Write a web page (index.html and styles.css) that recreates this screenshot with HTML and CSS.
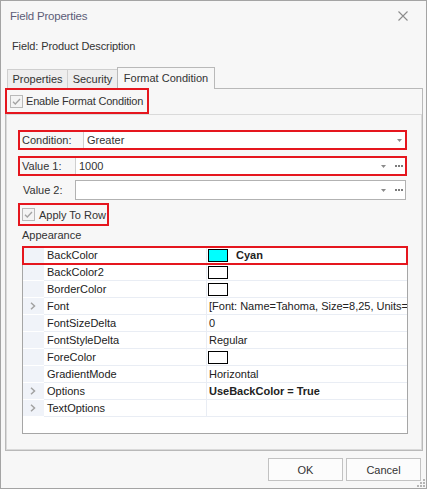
FILE: index.html
```html
<!DOCTYPE html>
<html>
<head>
<meta charset="utf-8">
<link rel="stylesheet" href="styles.css">
</head>
<body>
<div class="window">
  <div class="titlebar">
    <span class="title">Field Properties</span>
    <svg class="close" width="10" height="10" viewBox="0 0 10 10"><path d="M0.5 0.5 L9.5 9.5 M9.5 0.5 L0.5 9.5" stroke="#8c8c8c" stroke-width="1.1" fill="none"/></svg>
  </div>
  <div class="fieldname">Field: Product Description</div>
  <div class="tabs">
    <div class="tab tab-props">Properties</div>
    <div class="tab tab-sec">Security</div>
    <div class="tab tab-fmt active">Format Condition</div>
  </div>
  <div class="panel">
    <div class="enable">
      <svg class="check" width="13" height="13" viewBox="0 0 13 13"><rect x="0.5" y="0.5" width="12" height="12" fill="#f4f4f4" stroke="#b9b9b9"/><path d="M3 6.8 L5.3 9 L10 4" stroke="#a3a3a3" stroke-width="1.3" fill="none"/></svg>
      <span class="enable-text">Enable Format Condition</span>
    </div>
    <div class="group">
      <div class="hl field cond">
        <div class="lbl lbl-cond">Condition:</div>
        <div class="editor">
          <span class="val">Greater</span>
          <svg class="arrow arrow-cond" width="5" height="3" viewBox="0 0 5 3"><path d="M0 0 H5 L2.5 3 Z" fill="#8a8a8a"/></svg>
        </div>
      </div>
      <div class="hl field v1">
        <div class="lbl lbl-v">Value 1:</div>
        <div class="editor">
          <span class="val val-v">1000</span>
          <svg class="arrow" width="5" height="3" viewBox="0 0 5 3"><path d="M0 0 H5 L2.5 3 Z" fill="#8a8a8a"/></svg>
          <svg class="dots" width="8" height="2" viewBox="0 0 8 2"><rect x="0" y="0" width="2" height="2" fill="#7c7c7c"/><rect x="3" y="0" width="2" height="2" fill="#7c7c7c"/><rect x="6" y="0" width="2" height="2" fill="#7c7c7c"/></svg>
        </div>
      </div>
      <div class="field v2">
        <div class="lbl lbl-v2">Value 2:</div>
        <div class="editor boxed">
          <span class="val"></span>
          <svg class="arrow" width="5" height="3" viewBox="0 0 5 3"><path d="M0 0 H5 L2.5 3 Z" fill="#8a8a8a"/></svg>
          <svg class="dots" width="8" height="2" viewBox="0 0 8 2"><rect x="0" y="0" width="2" height="2" fill="#7c7c7c"/><rect x="3" y="0" width="2" height="2" fill="#7c7c7c"/><rect x="6" y="0" width="2" height="2" fill="#7c7c7c"/></svg>
        </div>
      </div>
      <div class="hl apply">
        <svg class="check" width="13" height="13" viewBox="0 0 13 13"><rect x="0.5" y="0.5" width="12" height="12" fill="#f4f4f4" stroke="#b9b9b9"/><path d="M3 6.8 L5.3 9 L10 4" stroke="#a3a3a3" stroke-width="1.3" fill="none"/></svg>
        <span>Apply To Row</span>
      </div>
      <div class="section">Appearance</div>
      <div class="grid">
        <div class="prow selected">
          <div class="gut"></div><div class="name">BackColor</div>
          <div class="value"><span class="swatch cyan"></span><b class="cname">Cyan</b></div>
        </div>
        <div class="prow">
          <div class="gut"></div><div class="name">BackColor2</div>
          <div class="value"><span class="swatch"></span></div>
        </div>
        <div class="prow">
          <div class="gut"></div><div class="name">BorderColor</div>
          <div class="value"><span class="swatch"></span></div>
        </div>
        <div class="prow">
          <div class="gut"><svg class="chev" width="6" height="8" viewBox="0 0 6 8"><path d="M1 0.8 L4.5 4 L1 7.2" stroke="#a2a2a2" stroke-width="1.5" fill="none"/></svg></div><div class="name">Font</div>
          <div class="value">[Font: Name=Tahoma, Size=8,25, Units=</div>
        </div>
        <div class="prow">
          <div class="gut"></div><div class="name">FontSizeDelta</div>
          <div class="value">0</div>
        </div>
        <div class="prow">
          <div class="gut"></div><div class="name">FontStyleDelta</div>
          <div class="value">Regular</div>
        </div>
        <div class="prow">
          <div class="gut"></div><div class="name">ForeColor</div>
          <div class="value"><span class="swatch"></span></div>
        </div>
        <div class="prow">
          <div class="gut"></div><div class="name">GradientMode</div>
          <div class="value">Horizontal</div>
        </div>
        <div class="prow">
          <div class="gut"><svg class="chev" width="6" height="8" viewBox="0 0 6 8"><path d="M1 0.8 L4.5 4 L1 7.2" stroke="#a2a2a2" stroke-width="1.5" fill="none"/></svg></div><div class="name">Options</div>
          <div class="value"><b>UseBackColor = True</b></div>
        </div>
        <div class="prow">
          <div class="gut"><svg class="chev" width="6" height="8" viewBox="0 0 6 8"><path d="M1 0.8 L4.5 4 L1 7.2" stroke="#a2a2a2" stroke-width="1.5" fill="none"/></svg></div><div class="name">TextOptions</div>
          <div class="value"></div>
        </div>
      </div>
    </div>
  </div>
  <div class="footer">
    <div class="btn">OK</div>
    <div class="btn">Cancel</div>
  </div>
  <svg class="grip" width="9" height="9" viewBox="0 0 9 9">
    <rect x="7" y="1" width="2" height="2" fill="#b5b5b5"/>
    <rect x="4" y="4" width="2" height="2" fill="#b5b5b5"/>
    <rect x="7" y="4" width="2" height="2" fill="#b5b5b5"/>
    <rect x="1" y="7" width="2" height="2" fill="#b5b5b5"/>
    <rect x="4" y="7" width="2" height="2" fill="#b5b5b5"/>
    <rect x="7" y="7" width="2" height="2" fill="#b5b5b5"/>
  </svg>
</div>
</body>
</html>
```

FILE: styles.css
```css
* { box-sizing: border-box; }
html, body { margin: 0; padding: 0; }
body {
  width: 427px;
  height: 489px;
  font-family: "Liberation Sans", Arial, sans-serif;
  font-size: 11px;
  color: #333333;
  background: #f7f7f7;
  overflow: hidden;
}
.window {
  position: relative;
  width: 427px;
  height: 489px;
  border: 1px solid #a4a4a4;
  background: #f7f7f7;
  display: flex;
  flex-direction: column;
}
.titlebar {
  height: 30px;
  flex: none;
  display: flex;
  align-items: center;
  justify-content: space-between;
  padding: 0 18px 0 9px;
}
.title { font-size: 11.5px; color: #5d5d78; letter-spacing: -0.2px; }
.close { display: block; }
.fieldname {
  margin-top: 8px;
  height: 14px;
  line-height: 14px;
  padding-left: 11px;
  letter-spacing: -0.1px;
  color: #333;
}
.tabs {
  margin-top: 14px;
  height: 21px;
  flex: none;
  display: flex;
  align-items: flex-end;
  padding-left: 6px;
}
.tab {
  height: 19px;
  border: 1px solid #cfcfcf;
  border-bottom: none;
  background: #eeeeee;
  display: flex;
  align-items: center;
  justify-content: center;
  color: #333;
  white-space: nowrap;
}
.tab-props { width: 61px; }
.tab-sec { width: 51px; margin-left: -1px; }
.tab-fmt { width: 98px; margin-left: -1px; }
.tab.active {
  height: 22px;
  margin-bottom: -1px;
  background: #f7f7f7;
  border-color: #b9b9b9;
  position: relative;
  z-index: 1;
  padding-bottom: 2px;
}
.panel {
  margin-left: 4px;
  width: 418px;
  height: 363px;
  flex: none;
  border: 1px solid #b9b9b9;
  background: #f7f7f7;
  display: flex;
  flex-direction: column;
}
.enable {
  margin: -1px 0 0 -1px;
  width: 144px;
  height: 26px;
  flex: none;
  border: 2px solid #e5161e;
  display: flex;
  align-items: center;
  gap: 3px;
  padding-left: 3px;
  position: relative;
  z-index: 2;
  white-space: nowrap;
}
.enable-text { letter-spacing: -0.2px; }
.check { display: block; flex: none; }
.group {
  flex: 1;
  border: 1px solid #dadada;
  display: flex;
  flex-direction: column;
}
.hl { border: 2px solid #e5161e; }
.field {
  margin-left: 11px;
  height: 20px;
  flex: none;
  display: flex;
}
.cond { margin-top: 15px; width: 389px; }
.v1 { margin-top: 6px; width: 389px; }
.v2 { margin-top: 4px; width: 388px; }
.lbl { display: flex; align-items: center; flex: none; white-space: nowrap; }
.lbl-cond { width: 63px; padding-left: 2px; }
.lbl-v { width: 55px; padding-left: 2px; }
.lbl-v2 { width: 57px; padding-left: 5px; }
.editor {
  flex: 1;
  display: flex;
  align-items: center;
  background: #ffffff;
  border-left: 1px solid #cfcfcf;
  padding-left: 3px;
  padding-right: 2px;
}
.editor.boxed { border: 1px solid #b2b2b2; padding-right: 2px; }
.val { flex: 1; color: #333; }
.arrow { display: block; flex: none; margin-right: 9px; }
.arrow-cond { margin-right: 1px; }
.dots { display: block; flex: none; }
.apply {
  margin: 3px 0 0 11px;
  width: 91px;
  height: 23px;
  flex: none;
  display: flex;
  align-items: center;
  gap: 4px;
  padding-left: 2px;
  white-space: nowrap;
}
.section {
  margin-top: 2px;
  height: 14px;
  line-height: 14px;
  padding-left: 15px;
  color: #333;
}
.grid {
  margin: 4px 0 0 15px;
  width: 386px;
  height: 188px;
  flex: none;
  border: 1px solid #a6a6a6;
  background: #ffffff;
  display: flex;
  flex-direction: column;
}
.prow {
  height: 17px;
  flex: none;
  display: grid;
  grid-template-columns: 21px 163px 200px;
  color: #222;
}
.prow.selected {
  outline: 2px solid #e5161e;
  outline-offset: -1px;
  position: relative;
  z-index: 1;
}
.gut {
  background: #f0f3f9;
  border-bottom: 1px solid #ffffff;
  display: flex;
  align-items: center;
  padding-left: 7px;
}
.chev { display: block; }
.name {
  border-bottom: 1px solid #e9edf4;
  border-right: 1px solid #e9edf4;
  padding-left: 3px;
  display: flex;
  align-items: center;
  white-space: nowrap;
}
.value {
  border-bottom: 1px solid #e9edf4;
  padding-left: 2px;
  display: flex;
  align-items: center;
  white-space: nowrap;
  overflow: hidden;
}
.swatch {
  display: block;
  width: 20px;
  height: 13px;
  margin-left: -1px;
  border: 1px solid #000;
  background: #fff;
  flex: none;
}
.swatch.cyan { background: #00ffff; }
.cname { margin-left: 8px; }
.footer {
  margin-top: 7px;
  display: flex;
  justify-content: flex-end;
  gap: 3px;
  padding-right: 5px;
}
.btn {
  width: 75px;
  height: 23px;
  border: 1px solid #c2c2c2;
  background: #fcfcfc;
  display: flex;
  align-items: center;
  justify-content: center;
  color: #333;
}
.grip { position: absolute; right: 1px; bottom: 1px; display: block; }
```
